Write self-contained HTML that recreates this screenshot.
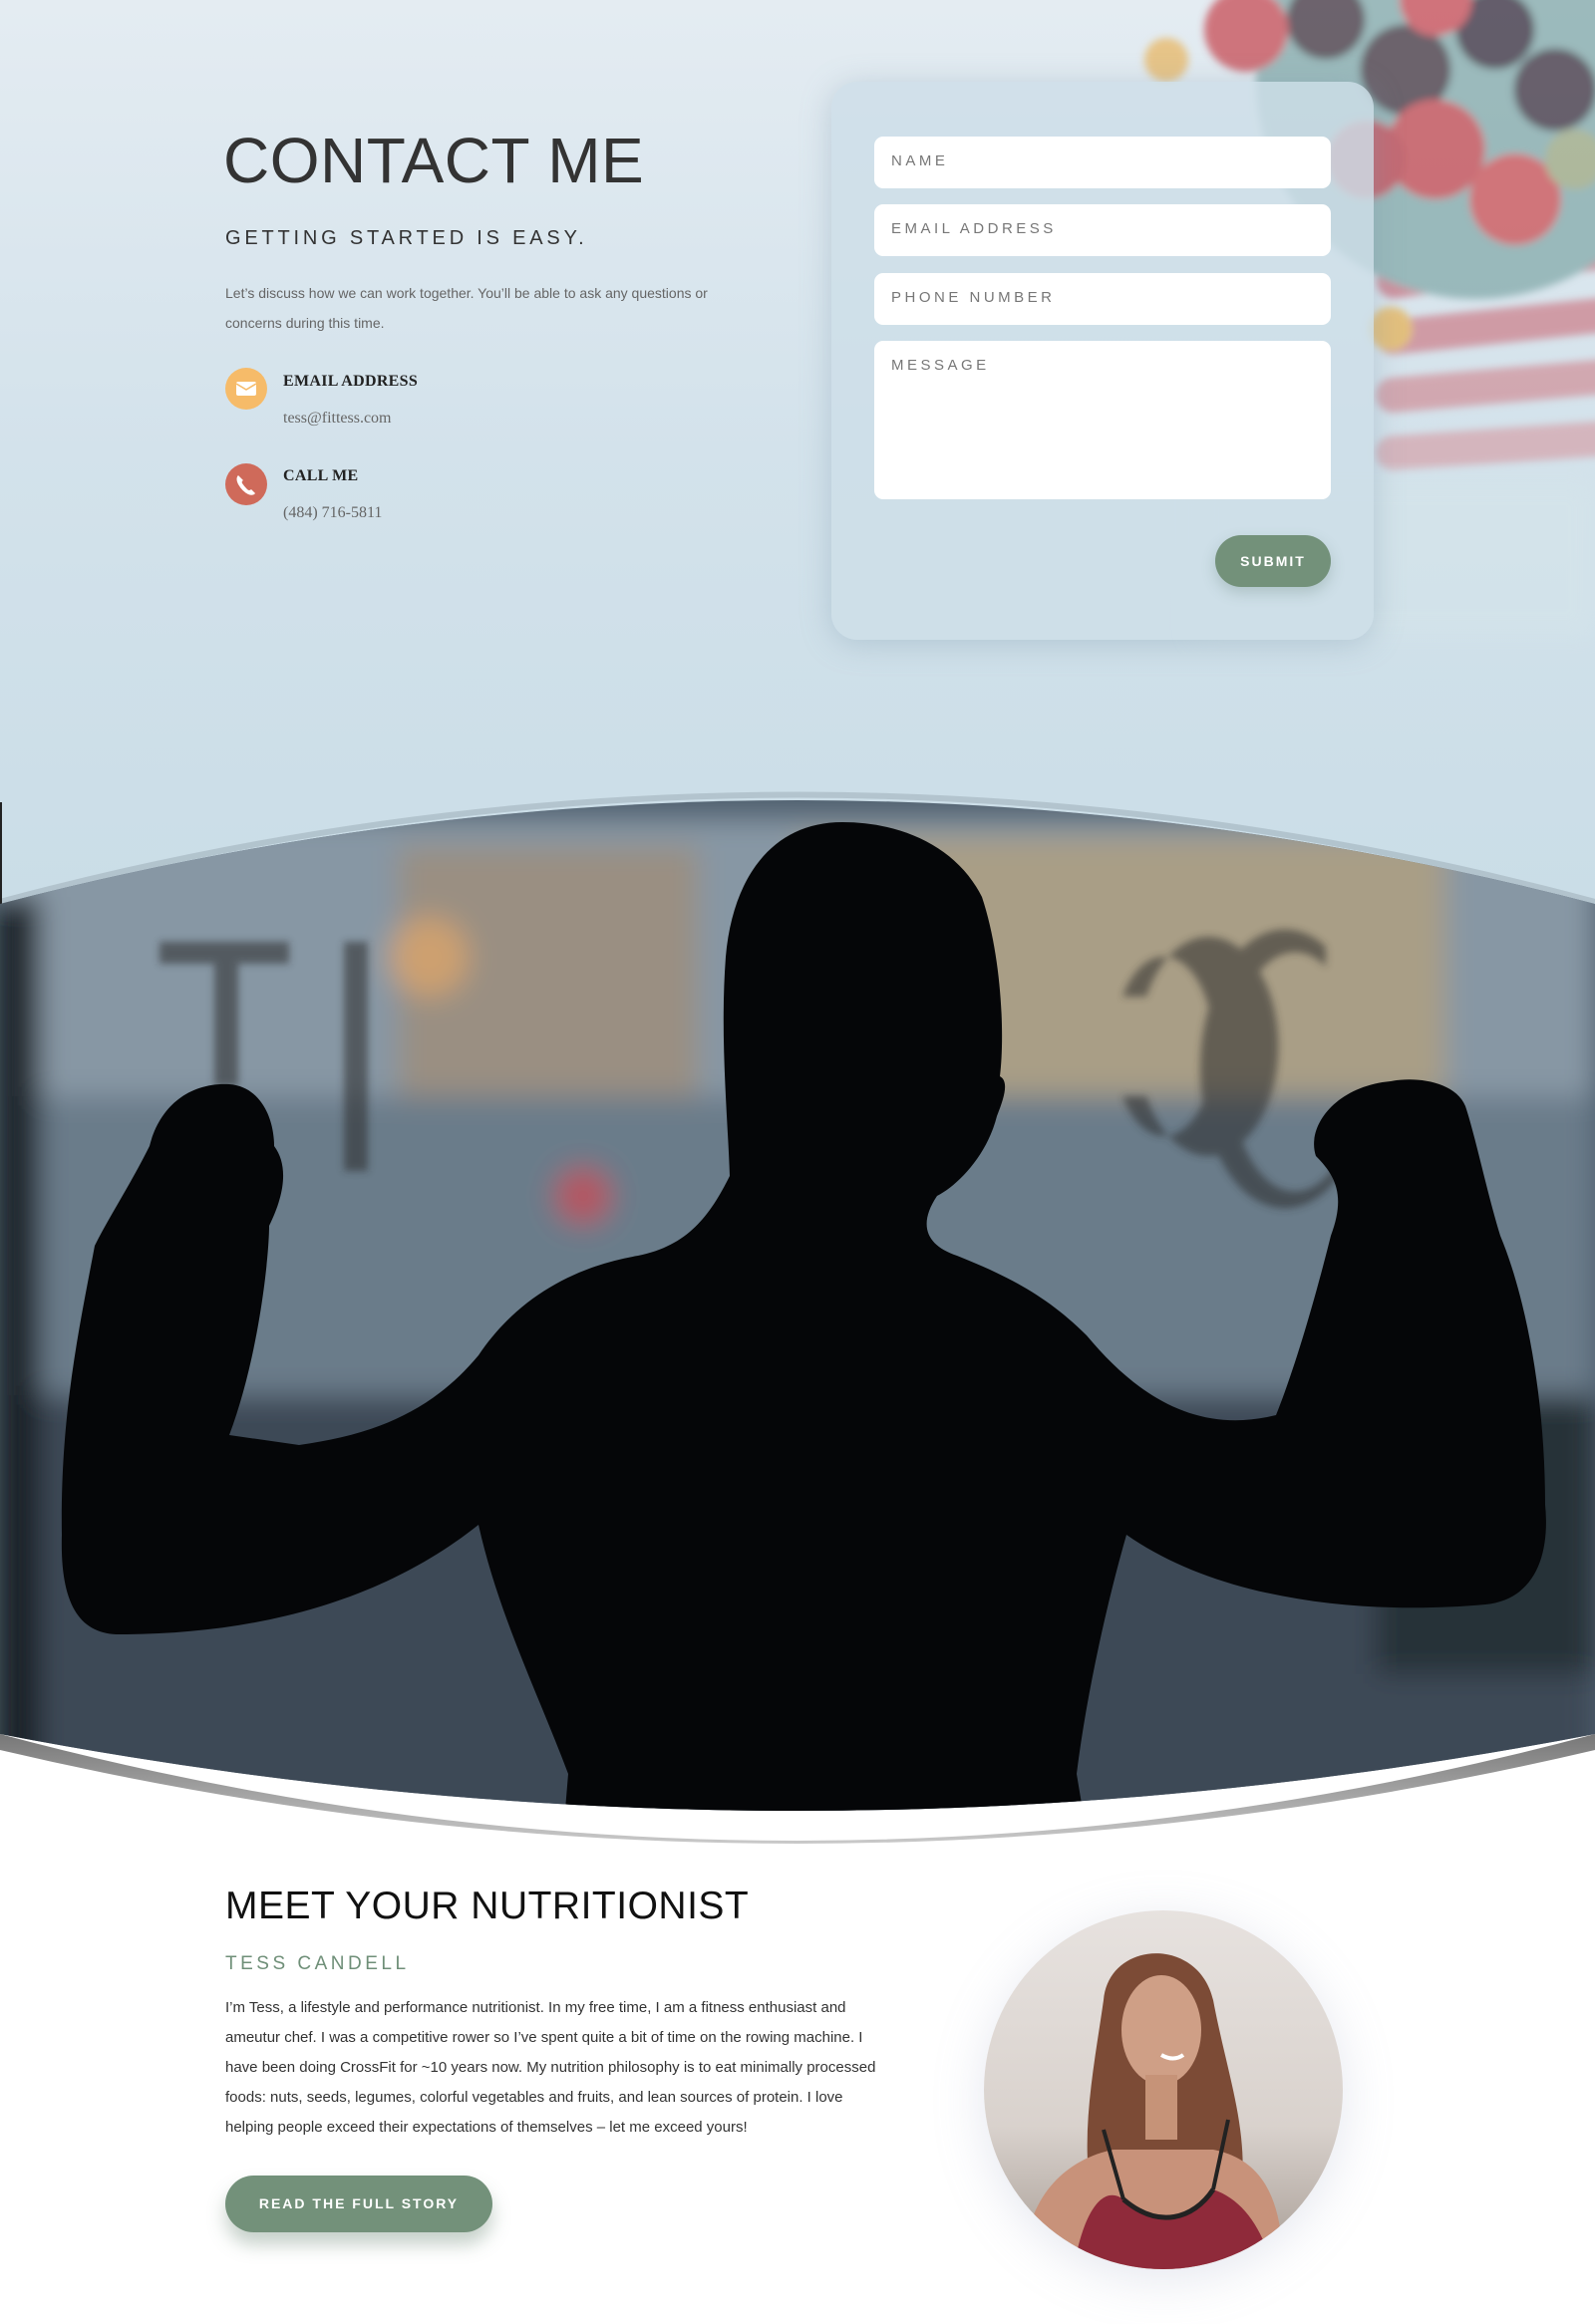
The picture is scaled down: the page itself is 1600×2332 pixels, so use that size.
<!DOCTYPE html>
<html><head><meta charset="utf-8">
<style>
*{margin:0;padding:0;box-sizing:border-box}
html,body{width:1600px;height:2332px;overflow:hidden;background:#fff;font-family:"Liberation Sans",sans-serif}
.abs{position:absolute}
#top{position:absolute;left:0;top:0;width:1600px;height:1000px;background:linear-gradient(180deg,#e4ecf2 0%,#d3e2eb 45%,#c8dce6 100%)}
h1{position:absolute;left:224px;top:124px;font-size:64px;font-weight:normal;color:#333;letter-spacing:0.5px;white-space:nowrap}
.sub{position:absolute;left:226px;top:228px;font-size:20px;letter-spacing:3.8px;color:#333;white-space:nowrap}
.p1{position:absolute;left:226px;top:279px;width:525px;font-size:14px;line-height:30px;color:#666}
.ic{position:absolute;left:226px;width:42px;height:42px;border-radius:50%}
.lab{position:absolute;left:284px;font-family:"Liberation Serif",serif;font-weight:bold;font-size:16px;color:#222;letter-spacing:.3px}
.val{position:absolute;left:284px;font-family:"Liberation Serif",serif;font-size:16px;color:#666}
#card{position:absolute;left:834px;top:82px;width:544px;height:560px;border-radius:26px;background:rgba(205,222,232,.82);box-shadow:0 4px 30px rgba(120,150,170,.35)}
.in{position:absolute;left:877px;width:458px;height:52px;background:#fff;border-radius:9px;font-size:15px;letter-spacing:3.5px;color:#777;padding:16px 0 0 17px}
.btn{position:absolute;background:#73917a;color:#fff;border-radius:30px;font-weight:bold;text-align:center;letter-spacing:2px}
.h2{position:absolute;left:226px;top:1891px;font-size:39px;color:#111;letter-spacing:.5px;white-space:nowrap}
.tc{position:absolute;left:226px;top:1960px;font-size:19px;letter-spacing:3.5px;color:#6f8f78}
.p2{position:absolute;left:226px;top:2000px;width:670px;font-size:15px;line-height:30px;color:#333}
</style></head><body>
<div id="top"></div>
<svg class="abs" style="left:0;top:0" width="1600" height="700">
<defs><filter id="b3"><feGaussianBlur stdDeviation="4"/></filter><filter id="b10"><feGaussianBlur stdDeviation="12"/></filter></defs>
<g opacity=".7" filter="url(#b3)">
<rect x="1380" y="250" width="260" height="35" rx="17" fill="#c8707e" transform="rotate(-8 1500 270)"/>
<rect x="1380" y="310" width="260" height="35" rx="17" fill="#cc7d88" transform="rotate(-6 1500 330)"/>
<rect x="1380" y="370" width="260" height="35" rx="17" fill="#d08f98" transform="rotate(-5 1500 390)"/>
<rect x="1380" y="430" width="260" height="35" rx="17" fill="#d5a3aa" transform="rotate(-4 1500 450)"/>
<circle cx="1480" cy="80" r="220" fill="#7ea6a6"/>
<circle cx="1410" cy="70" r="46" fill="#3b2a36"/><circle cx="1500" cy="30" r="40" fill="#2f2430"/>
<circle cx="1560" cy="90" r="42" fill="#352835"/><circle cx="1330" cy="20" r="40" fill="#3a2a35"/>
<circle cx="1440" cy="150" r="50" fill="#c23c44"/><circle cx="1520" cy="200" r="46" fill="#cb444a"/>
<circle cx="1370" cy="160" r="40" fill="#b8343f"/><circle cx="1580" cy="160" r="30" fill="#9aa57a"/>
<circle cx="1440" cy="0" r="36" fill="#c8404a"/><circle cx="1250" cy="30" r="42" fill="#c6434c"/>
<circle cx="1170" cy="60" r="22" fill="#e9b45c"/><circle cx="1395" cy="330" r="22" fill="#e8b050"/>
</g>
<rect x="1200" y="480" width="400" height="160" fill="#d4e4ea" opacity=".7" filter="url(#b10)"/>
</svg>
<h1>CONTACT ME</h1>
<div class="sub">GETTING STARTED IS EASY.</div>
<div class="p1">Let’s discuss how we can work together. You’ll be able to ask any questions or concerns during this time.</div>
<div class="ic" style="top:369px;background:#f6bb69"><svg width="42" height="42"><rect x="11" y="14" width="20" height="14" rx="2" fill="#fff"/><path d="M11 16 L21 22 L31 16" stroke="#f6bb69" stroke-width="1.6" fill="none"/></svg></div>
<div class="lab" style="top:374px">EMAIL ADDRESS</div>
<div class="val" style="top:411px">tess@fittess.com</div>
<div class="ic" style="top:465px;background:#cf6a5a"><svg width="42" height="42"><path d="M13 12 q-3 3 0 9 q4 7 10 10 q5 2 7 -1 l-4 -4 q-2 2 -4 0 q-3 -3 -5 -6 q-1 -2 1 -3 z" fill="#fff"/></svg></div>
<div class="lab" style="top:469px">CALL ME</div>
<div class="val" style="top:506px">(484) 716-5811</div>
<div id="card"></div>
<div class="in" style="top:137px">NAME</div>
<div class="in" style="top:205px">EMAIL ADDRESS</div>
<div class="in" style="top:274px">PHONE NUMBER</div>
<div class="in" style="top:342px;height:159px">MESSAGE</div>
<div class="btn" style="left:1219px;top:537px;width:116px;height:52px;line-height:52px;font-size:14px;box-shadow:0 6px 14px rgba(80,110,100,.25)">SUBMIT</div>

<svg class="abs" style="left:0;top:0" width="1600" height="1900">
<defs>
<clipPath id="cp"><path d="M0,907 Q800,699 1600,907 L1600,1740 Q800,1894 0,1740 Z"/></clipPath>
<filter id="bl"><feGaussianBlur stdDeviation="14"/></filter>
<linearGradient id="sh" x1="0" y1="0" x2="0" y2="1"><stop offset="0" stop-color="#555"/><stop offset="1" stop-color="#bbb"/></linearGradient>
</defs>
<path d="M0,1740 Q800,1954 1600,1740 L1600,1756 Q800,1944 0,1756Z" fill="url(#sh)" opacity=".8"/>
<path d="M0,905 Q800,690 1600,905" stroke="#9aa9b3" stroke-width="6" fill="none" opacity=".5"/>
<rect x="0" y="805" width="2" height="102" fill="#222"/>
<g clip-path="url(#cp)">
<rect x="0" y="780" width="1600" height="1120" fill="#4f5f6e"/>
<g filter="url(#bl)">
<rect x="0" y="820" width="1600" height="300" fill="#8797a4"/>
<rect x="800" y="840" width="650" height="420" fill="#a99e86"/>
<rect x="400" y="850" width="300" height="300" fill="#9a8f82"/>
<rect x="0" y="1100" width="1600" height="300" fill="#6a7c8a"/>
<rect x="0" y="1400" width="1600" height="440" fill="#3c4a57"/>
<rect x="0" y="900" width="40" height="900" fill="#161a20"/>
<circle cx="430" cy="960" r="40" fill="#d9a46a" opacity=".8"/>
<circle cx="585" cy="1200" r="28" fill="#c84a55" opacity=".8"/>
<rect x="1380" y="1400" width="220" height="280" fill="#283038"/>
</g>
<g fill="#2c2c2c" opacity=".55" filter="url(#b3)">
<rect x="160" y="945" width="130" height="22"/><rect x="215" y="945" width="24" height="145"/>
<rect x="345" y="945" width="24" height="230"/>
<path d="M1150 1000 a70 110 0 1 1 0 100 l-24 0 a50 90 0 1 0 0 -100z"/>
<path d="M1330 950 a85 140 0 1 0 20 220 l0 -20 a65 120 0 1 1 -20 -180z"/>
</g>
<path fill="#050608" d="M845,825 C775,825 735,880 728,960 C722,1040 730,1120 732,1180 C712,1220 690,1250 640,1260
C580,1270 520,1300 480,1360 C430,1420 370,1440 300,1450 L230,1440 C260,1360 270,1260 270,1230 C285,1200 290,1170 275,1150
C275,1120 260,1090 230,1088 C190,1086 160,1110 150,1150 C130,1190 110,1220 95,1250 C80,1330 60,1420 62,1540
C60,1610 80,1640 120,1640 C250,1640 380,1610 480,1530 C500,1620 540,1700 570,1780 L560,1900 L1100,1900 L1080,1780
C1090,1700 1110,1610 1130,1540 C1230,1610 1380,1620 1490,1610 C1540,1605 1555,1560 1550,1510 C1550,1400 1530,1300 1505,1240
C1490,1190 1480,1140 1470,1110 C1460,1085 1420,1080 1395,1085 C1340,1090 1310,1130 1320,1160 C1340,1180 1350,1200 1335,1240
C1320,1300 1300,1370 1280,1420 C1200,1440 1140,1400 1090,1340 C1050,1300 1010,1280 960,1260 C930,1250 920,1230 940,1200
C960,1190 990,1160 1000,1120 C1008,1100 1012,1085 1003,1080 C1008,1040 1005,960 985,900 C960,850 905,825 845,825Z"/>
</g>
</svg>

<div class="h2">MEET YOUR NUTRITIONIST</div>
<div class="tc">TESS CANDELL</div>
<div class="p2">I’m Tess, a lifestyle and performance nutritionist. In my free time, I am a fitness enthusiast and ameutur chef. I was a competitive rower so I’ve spent quite a bit of time on the rowing machine. I have been doing CrossFit for ~10 years now. My nutrition philosophy is to eat minimally processed foods: nuts, seeds, legumes, colorful vegetables and fruits, and lean sources of protein. I love helping people exceed their expectations of themselves – let me exceed yours!</div>
<div class="btn" style="left:226px;top:2183px;width:268px;height:57px;line-height:57px;font-size:14px;box-shadow:0 12px 18px rgba(90,120,100,.35)">READ THE FULL STORY</div>

<div class="abs" style="left:987px;top:1917px;width:360px;height:360px;border-radius:50%;overflow:hidden;box-shadow:0 10px 50px rgba(150,160,190,.25)">
<svg width="360" height="360">
<defs><linearGradient id="bg2" x1="0" y1="0" x2="0" y2="1"><stop offset="0" stop-color="#e7e2df"/><stop offset=".6" stop-color="#d9d2cd"/><stop offset="1" stop-color="#a59a92"/></linearGradient></defs>
<rect width="360" height="360" fill="url(#bg2)"/>
<path d="M120 90 C125 30 215 25 230 90 C245 170 270 230 255 300 L110 300 C95 230 110 160 120 90Z" fill="#7c4b36"/>
<path d="M40 360 C40 290 80 250 130 240 L230 240 C280 250 300 290 300 360Z" fill="#c8927a"/>
<ellipse cx="178" cy="120" rx="40" ry="55" fill="#cf9f86"/>
<rect x="162" y="165" width="32" height="65" fill="#c69378"/>
<path d="M178 145 q12 7 22 0" stroke="#fff" stroke-width="4" fill="none"/>
<path d="M90 360 C100 300 120 275 140 290 C175 320 210 310 230 280 C260 290 280 320 290 360Z" fill="#8f2a3a"/>
<path d="M140 290 C175 320 210 310 230 280" stroke="#222" stroke-width="5" fill="none"/>
<path d="M120 220 L140 290 M245 210 L230 280" stroke="#222" stroke-width="4"/>
</svg></div>
</body></html>
